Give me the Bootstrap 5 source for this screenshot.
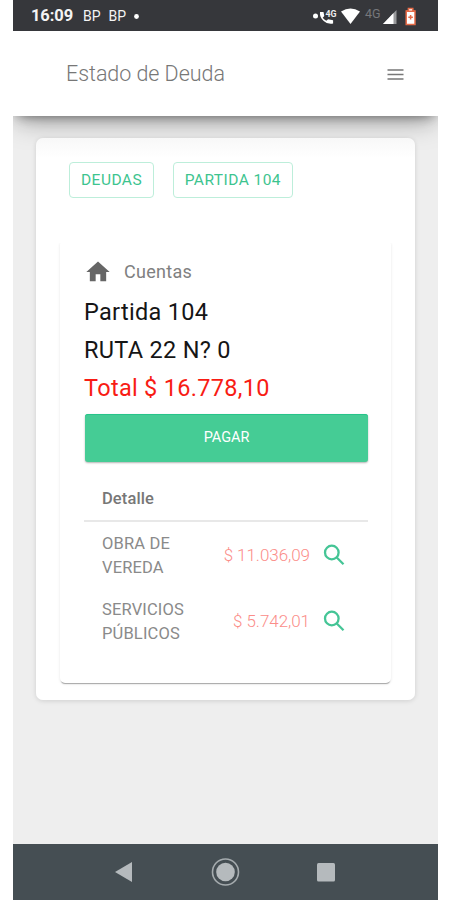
<!DOCTYPE html>
<html lang="es">
<head>
<meta charset="utf-8">
<meta name="viewport" content="width=device-width, initial-scale=1">
<title>Estado de Deuda</title>
<link href="https://cdn.jsdelivr.net/npm/bootstrap@5.3.0/dist/css/bootstrap.min.css" rel="stylesheet">
<style>
body{font-family:Roboto,"Liberation Sans",sans-serif;background:#fff;overflow:hidden}
svg{display:block;flex:none}
.phone{width:425px;height:900px;margin-left:13px;background:#eee}
.statusbar{height:31px;background:#36373b;color:#f4f4f4;padding:2px 20px 0 18px;font-size:14px}
.clock{font-size:16.5px;font-weight:700;letter-spacing:-.1px;width:52px}
.topbar{height:85px;padding:2px 34px 0 53px;box-shadow:0 4px 12px -5px rgba(0,0,0,.55),0 8px 28px -4px rgba(0,0,0,.35);clip-path:inset(0 0 -40px 0)}
.title{font-size:21.5px;font-weight:300;color:#777;letter-spacing:-.05px}
.content{padding:22px 23px 0}
.panel{height:562px;border-radius:7px;padding:24px 24px 0;box-shadow:0 1px 5px rgba(0,0,0,.13);position:relative;z-index:1;background:linear-gradient(#f8f8f8,#fff 20px)}
.crumbs{width:224px;margin-left:9px}
.crumb{height:36px;padding:0 11px;border:1.5px solid #bdeeda;border-radius:4px;color:#3dc48f;font-size:15.5px;line-height:32px;letter-spacing:.45px;background:#fff}
.account{margin-top:42px;height:443px;border-radius:5px;padding:13px 23px 0 24px;box-shadow:0 2px 1px -1px rgba(0,0,0,.3),0 1px 3px rgba(0,0,0,.1);clip-path:inset(3px -4px -4px -4px)}
.sec{gap:12px;height:40px;padding-bottom:3px}
.section-name{font-size:18px;color:#808080;letter-spacing:.3px}
.line{font-size:23.5px;line-height:38px;color:#151515;letter-spacing:.3px}
.total{color:#f81c14}
.pay{width:283px;height:48px;margin:7px 0 0 1px;border-radius:3px;background:#45cc95;color:#fff;font-size:14.5px;letter-spacing:-.05px;box-shadow:0 1px 2px rgba(0,0,0,.3),inset 0 1px #27c48a}
.pay:hover{background:#3dc48f;color:#fff}
.detail-head{height:60px;padding:25px 0 0 18px;font-size:16.5px;font-weight:500;color:#777;letter-spacing:.1px;border-bottom:2px solid #e8e8e8}
.debt{height:66px;padding:1px 23px 0 18px;font-size:16.5px;line-height:24px;color:#8a8a8a;letter-spacing:.15px}
.amount{font-weight:300;color:#fb8d89;margin:-2px 13px 0 0;font-size:17px;letter-spacing:-.05px}
.debt svg{margin-top:-1px}
.navkeys{height:56px;background:#454e53}
</style>
</head>
<body>
<div class="phone d-flex flex-column">
  <div class="statusbar d-flex align-items-center">
    <span class="clock">16:09</span><span class="me-2">BP</span><span>BP</span>
    <svg class="ms-2" width="5" height="5"><circle cx="2.5" cy="2.5" r="2.4" fill="#fff"/></svg>
    <svg class="ms-auto mb-1" width="105" height="24" viewBox="0 0 105 24">
      <circle cx="2.5" cy="13" r="2.5" fill="#fff"/>
      <path d="M7 9h3.500l.8 4-1.600 1.800q1.600 1.800 3.600 3l1.800-1.500 5 1v3.200q-5.800 1-9.400-2.600Q6.500 14.500 7 9z" fill="#fff"/>
      <text x="12.500" y="13.500" font-size="9.5" font-weight="700" fill="#eee" textLength="11" lengthAdjust="spacingAndGlyphs">4G</text>
      <path d="M28 8.500q9.500-6 19 0L37.500 21z" fill="#fff"/>
      <text x="52" y="15" font-size="12.500" fill="#77787b">4G</text>
      <path d="M70 21L83.500 7V21z" fill="#98999b"/><path d="M70 21l10.500-10.900V21z" fill="#fff"/>
      <path d="M93.200 8h2.200V5.500h4.400V8h2.200v13.500h-8.800z" fill="#fff" stroke="#e66b47" stroke-width="1.500"/>
      <path d="M93 8.200h9M97.600 12v4.600M95.300 14.300h4.600" stroke="#e66b47" stroke-width="1.500"/>
    </svg>
  </div>
  <header class="topbar bg-white d-flex align-items-center justify-content-between position-relative">
    <span class="title">Estado de Deuda</span>
    <svg width="17" height="13" viewBox="0 0 17 13"><path d="M.5 2h16M.5 6.500h16M.5 11h16" stroke="#777" stroke-width="1.700"/></svg>
  </header>
  <main class="content flex-grow-1">
    <section class="panel">
      <div class="d-flex crumbs">
        <button class="crumb">DEUDAS</button><button class="crumb ms-auto">PARTIDA 104</button>
      </div>
      <article class="account bg-white">
        <div class="d-flex align-items-center sec">
          <svg width="28" height="28" viewBox="0 0 24 24" fill="#666"><path d="M10 20v-6h4v6h5v-8h3L12 3 2 12h3v8z"/></svg>
          <span class="section-name">Cuentas</span>
        </div>
        <div class="line">Partida 104</div>
        <div class="line">RUTA 22 N? 0</div>
        <div class="line total">Total $ 16.778,10</div>
        <button class="pay btn border-0 d-block">PAGAR</button>
        <div class="detail-head">Detalle</div>
        <div class="debt d-flex align-items-center">
          <span>OBRA DE<br>VEREDA</span><span class="amount ms-auto">$ 11.036,09</span>
          <svg width="22" height="22" viewBox="0 0 22 22" fill="none" stroke="#45c596" stroke-width="2.300"><circle cx="8.800" cy="8.500" r="6.800"/><path d="M13.500 13.300l7 7"/></svg>
        </div>
        <div class="debt d-flex align-items-center">
          <span>SERVICIOS<br>PÚBLICOS</span><span class="amount ms-auto">$ 5.742,01</span>
          <svg width="22" height="22" viewBox="0 0 22 22" fill="none" stroke="#45c596" stroke-width="2.300"><circle cx="8.800" cy="8.500" r="6.800"/><path d="M13.500 13.300l7 7"/></svg>
        </div>
      </article>
    </section>
  </main>
  <nav class="navkeys">
    <svg width="425" height="56" viewBox="0 0 425 56" fill="#b5babd"><path d="M102 28l17-10v20z"/><circle cx="212.500" cy="28" r="9.300"/><circle cx="212.500" cy="28" r="13" fill="none" stroke="#a5abae" stroke-width="1.600"/><rect x="304" y="19" width="18" height="18.500" rx="1.500"/></svg>
  </nav>
</div>
<script src="https://cdn.jsdelivr.net/npm/bootstrap@5.3.0/dist/js/bootstrap.bundle.min.js"></script>
</body>
</html>
